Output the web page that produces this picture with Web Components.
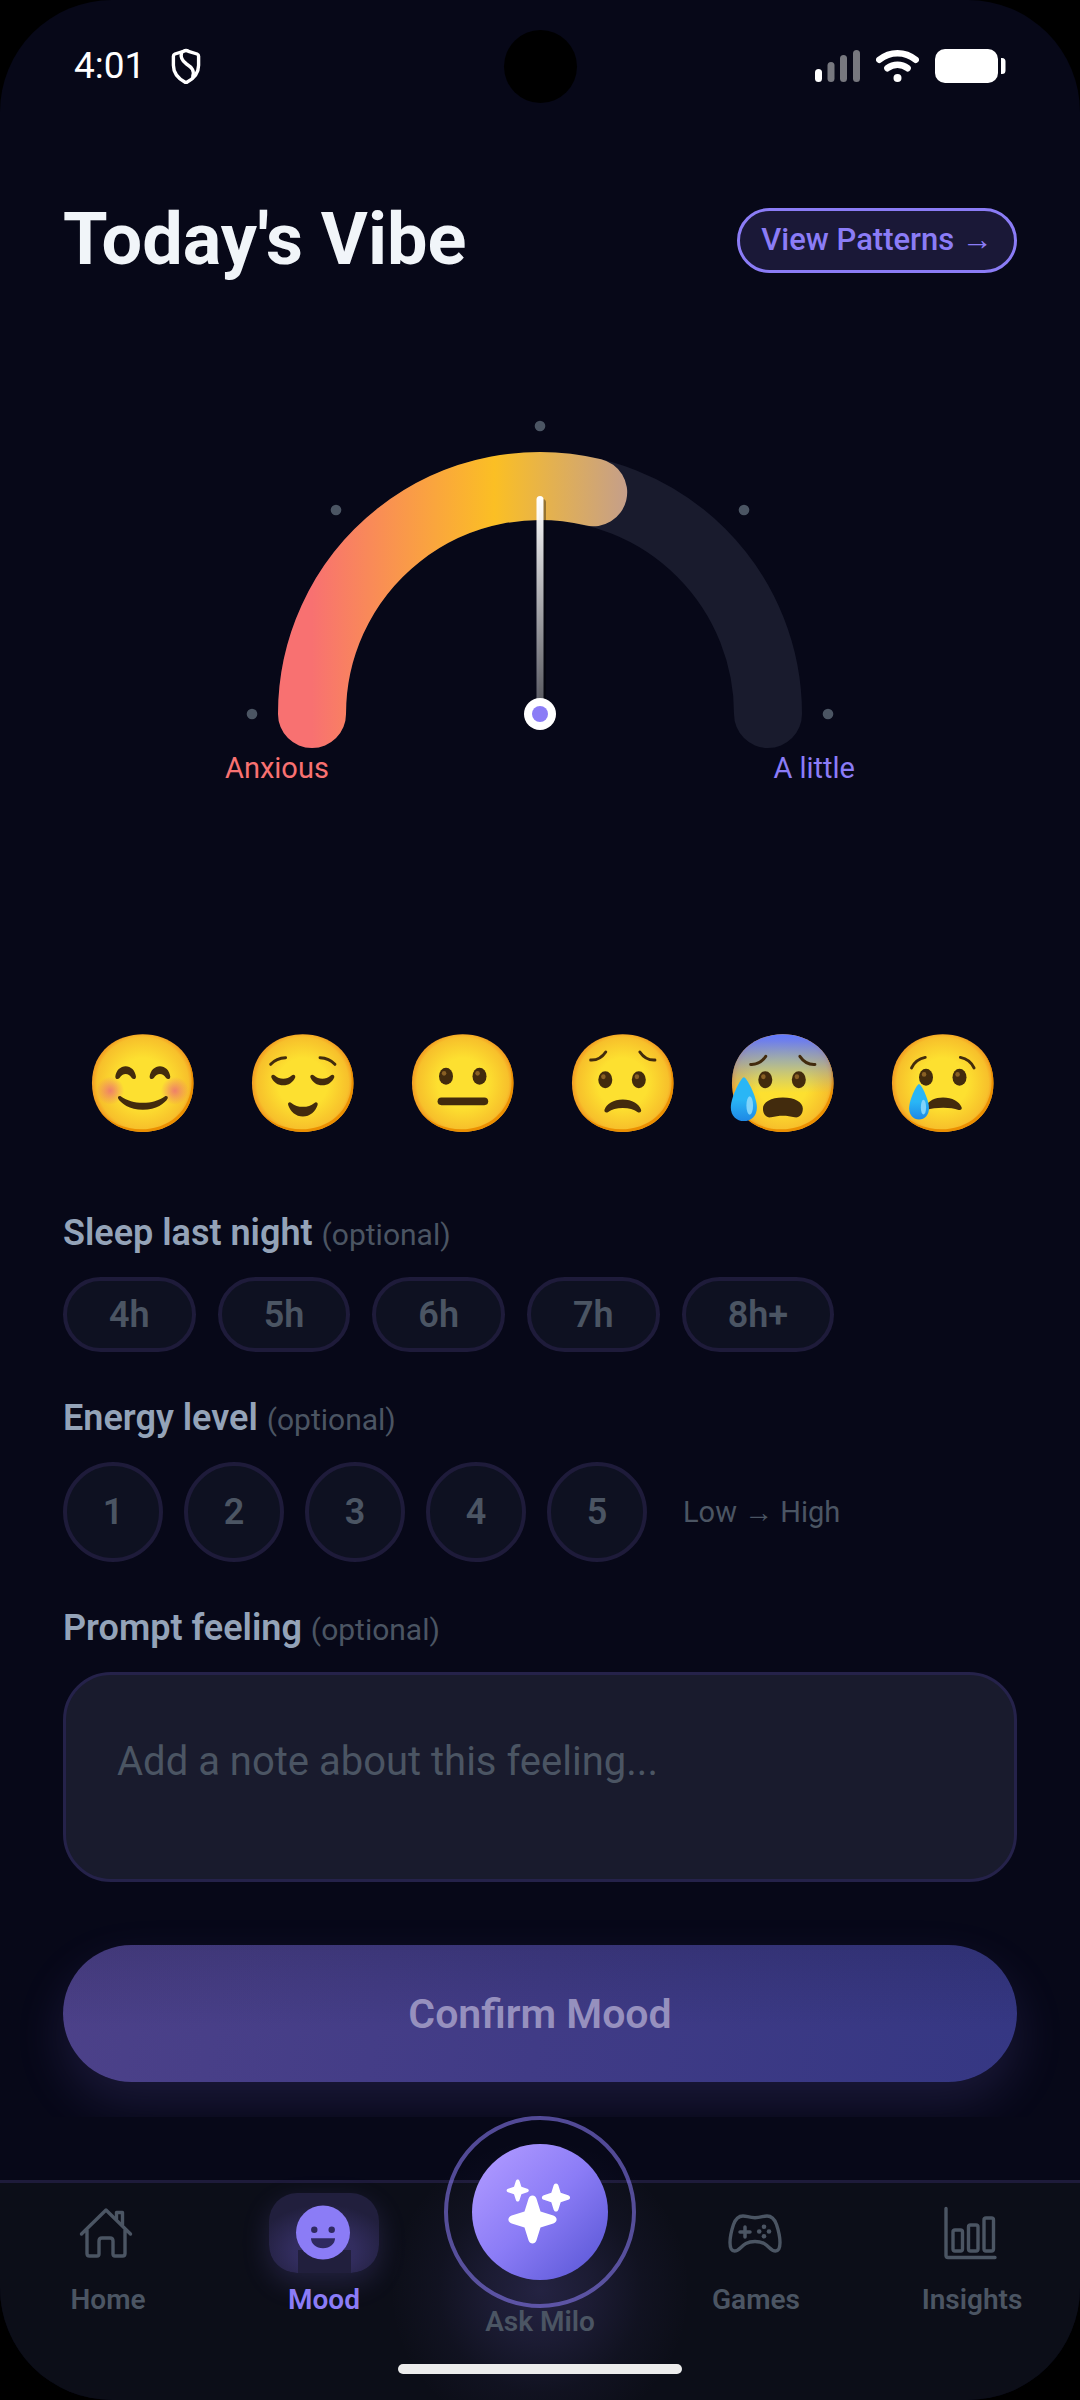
<!DOCTYPE html>
<html lang="en">
<head>
<meta charset="utf-8">
<meta name="viewport" content="width=device-width, initial-scale=1">
<title>Today's Vibe</title>
<style>
  :root {
    --bg: #070818;
    --nav: #0c0e18;
    --card: #191b2d;
    --line: #1e1b3a;
    --accent: #8b7cf6;
    --text: #f1f5f9;
    --label: #94a3b8;
    --muted: #4b5563;
    --gutter: 63px;
  }
  body { margin: 0; background: #000; color: var(--text); font-family: Roboto, "Liberation Sans", sans-serif; }
</style>
</head>
<body>
<vibe-screen>
  <status-bar slot="top" time="4:01"></status-bar>
  <vibe-header heading="Today's Vibe" action="View Patterns →"></vibe-header>
  <mood-gauge low="Anxious" high="A little"></mood-gauge>
  <mood-picker>
    <mood-face mood="happy"></mood-face>
    <mood-face mood="calm"></mood-face>
    <mood-face mood="neutral"></mood-face>
    <mood-face mood="worried"></mood-face>
    <mood-face mood="anxious"></mood-face>
    <mood-face mood="sad"></mood-face>
  </mood-picker>
  <choice-field label="Sleep last night" options="4h,5h,6h,7h,8h+"></choice-field>
  <choice-field label="Energy level" options="1,2,3,4,5" round>Low → High</choice-field>
  <note-field label="Prompt feeling" placeholder="Add a note about this feeling..."></note-field>
  <confirm-button>Confirm Mood</confirm-button>
  <nav-bar slot="bottom">
    <nav-item icon="home">Home</nav-item>
    <nav-item icon="mood" active>Mood</nav-item>
    <ask-item>Ask Milo</ask-item>
    <nav-item icon="games">Games</nav-item>
    <nav-item icon="insights">Insights</nav-item>
  </nav-bar>
</vibe-screen>

<script>
// every element gets the same reset, then its own markup
const RESET = `<style>
  *{box-sizing:border-box}
  button,textarea{font:inherit;color:inherit;margin:0}
  button{cursor:pointer}
  a{color:inherit;text-decoration:none}
  svg{display:block}
</style>`;

class Base extends HTMLElement {
  connectedCallback() {
    if (this.shadowRoot) return;
    this.attachShadow({ mode: 'open' }).innerHTML = RESET + this.render();
  }
  attr(name) { return this.getAttribute(name) || ''; }
}

// "→" sits in its own span so it can be drawn lighter than the words around it
const arrows = s => s.replace('→', '<span class="arrow">→</span>');

customElements.define('vibe-screen', class extends Base {
  render() {
    return `<style>
      :host{display:flex;flex-direction:column;min-height:100vh;background:var(--bg);border-radius:112px;overflow:hidden}
      main{flex:1;display:flex;flex-direction:column;padding:64px var(--gutter) 35px;margin-bottom:63px;overflow:hidden}
    </style>
    <slot name="top"></slot>
    <main><slot></slot></main>
    <slot name="bottom"></slot>`;
  }
});

customElements.define('status-bar', class extends Base {
  render() {
    return `<style>
      :host{display:grid;grid-template-columns:1fr 73px 1fr;align-items:center;height:132px;padding:0 74px;color:#fff;font-size:37px;line-height:44px}
      .left{display:flex;align-items:center;gap:26px}
      .camera{width:73px;height:73px;border-radius:50%;background:#000}
      .right{display:flex;align-items:center;justify-content:flex-end;gap:16px}
    </style>
    <div class="left">
      <time>${this.attr('time')}</time>
      <svg width="30" height="36" viewBox="0 0 30 36" fill="none" stroke="#fff" stroke-width="3.4" stroke-linejoin="round" stroke-linecap="round">
        <path d="M15 2.500q1.200 0 2.500.8l8.600 2.700q1.500.6 1.500 2.200v9c0 7.600-4.800 13.600-12.600 17.600C7.200 30.800 2.400 24.800 2.400 17.200v-9q0-1.600 1.500-2.200l8.600-2.700q1.300-.8 2.500-.8z"/>
        <path d="M10.600 4.500C9 10 11.500 13.200 15.500 16c5.500 3.600 8 6.300 6.300 12.300"/>
      </svg>
    </div>
    <div class="camera"></div>
    <div class="right">
      <svg width="45" height="34" viewBox="0 0 45 34" fill="#77787f">
        <rect x="0" y="20" width="7" height="13" rx="3.500" fill="#fff"/>
        <rect x="12.500" y="13" width="7" height="20" rx="3.500"/>
        <rect x="25" y="6" width="7" height="27" rx="3.500"/>
        <rect x="38" y="1" width="7" height="32" rx="3.500"/>
      </svg>
      <svg width="43" height="34" viewBox="0 0 43 34" fill="none" stroke="#fff" stroke-width="6.500" stroke-linecap="round">
        <path d="M3.300 10.800c10.800-8.800 25.600-8.800 36.400 0M11.400 19.200c6-4.500 14.200-4.500 20.200 0"/>
        <circle cx="21.500" cy="29" r="4" fill="#fff" stroke="none"/>
      </svg>
      <svg width="71" height="34" viewBox="0 0 71 34" fill="#fff">
        <rect width="63" height="34" rx="10"/>
        <path d="M66 9h1a3.500 3.500 0 0 1 3.500 3.500v9A3.500 3.500 0 0 1 67 25h-1z"/>
      </svg>
    </div>`;
  }
});

customElements.define('vibe-header', class extends Base {
  render() {
    return `<style>
      :host{display:flex;align-items:center;justify-content:space-between}
      h1{margin:0;font-size:72px;line-height:88px;font-weight:700}
      button{height:65px;padding:0 21px;border:3px solid var(--accent);border-radius:33px;background:rgba(139,124,246,.14);color:var(--accent);font-size:31px;line-height:36px;font-weight:500}
      .arrow{font-weight:400}
    </style>
    <h1>${this.attr('heading')}</h1>
    <button type="button">${arrows(this.attr('action'))}</button>`;
  }
});

// half dial: the track runs from 9 to 3 o'clock on a 228 radius
customElements.define('mood-gauge', class extends Base {
  render() {
    return `<style>
      :host{display:block;align-self:center;width:630px;max-width:100%;margin-top:136px}
      svg{width:100%}
      div{display:flex;justify-content:space-between;font-size:29px;line-height:34px}
      .low{color:#f87171}
      .high{color:var(--accent)}
    </style>
    <svg viewBox="-315 -294 630 331" fill="none" role="img">
      <defs>
        <linearGradient id="arc" gradientUnits="userSpaceOnUse" x1="-228" y1="0" x2="228" y2="0">
          <stop stop-color="#f87171"/><stop offset=".4" stop-color="#fbbf24"/><stop offset="1" stop-color="#8b7cf6"/>
        </linearGradient>
        <linearGradient id="hand" gradientUnits="userSpaceOnUse" x1="0" y1="-218" x2="0" y2="0">
          <stop stop-color="#fff"/><stop offset="1" stop-color="#fff" stop-opacity=".3"/>
        </linearGradient>
      </defs>
      <g fill="#4b5563">
        <circle cx="-288" cy="0" r="5.300"/><circle cx="-204" cy="-204" r="5.300"/><circle cx="0" cy="-288" r="5.300"/>
        <circle cx="204" cy="-204" r="5.300"/><circle cx="288" cy="0" r="5.300"/>
      </g>
      <g stroke-width="68" stroke-linecap="round">
        <path d="M-228 0A228 228 0 0 1 228 0" stroke="#191b2d"/>
        <path d="M-228 0A228 228 0 0 1 53.200-221.700" stroke="url(#arc)"/>
      </g>
      <rect x="-1" y="-215" width="7" height="212" rx="3.500" fill="#000" fill-opacity=".35"/>
      <rect x="-3.500" y="-218" width="7" height="215" rx="3.500" fill="url(#hand)"/>
      <circle r="16" fill="#fff"/><circle r="8" fill="#8b7cf6"/>
    </svg>
    <div><span class="low">${this.attr('low')}</span><span class="high">${this.attr('high')}</span></div>`;
  }
});

customElements.define('mood-picker', class extends Base {
  render() {
    return `<style>
      :host{display:flex;gap:6px;margin:243px 0 72px}
      ::slotted(*){flex:1}
    </style><slot></slot>`;
  }
});

const MIRROR = 'transform="matrix(-1 0 0 1 127.400 0)"';
const both = (shape) => `${shape}<g ${MIRROR}>${shape}</g>`;
const brow = d => both(`<path d="${d}" fill="none" stroke="#422b0d" stroke-width="3.400" stroke-linecap="round"/>`);
const eyes = (x, y) => [x, x + 38.3].map(cx =>
  `<ellipse cx="${cx}" cy="${y}" rx="8" ry="9.700"/><ellipse cx="${cx - 2.2}" cy="${y - 3.4}" rx="2.600" ry="2.800" fill="#896024"/>`).join('');

const FACES = {
  happy: `<circle cx="26.500" cy="71.700" r="16" fill="url(#blush)"/><circle cx="100.400" cy="71.700" r="16" fill="url(#blush)"/>
    ${both('<path d="M32.300 55.500c.8-7 6-11.800 11.800-11.800s11 4.800 11.800 11.800c.2 3.200-3.200 3.800-4.800 1.600-2-2.600-4.200-4.400-7-4.400s-5 1.800-7 4.400c-1.600 2.200-5 1.600-4.800-1.600z"/>')}
    <path d="M35.400 80.200c-.5-2 1.600-3.200 3.400-2 7 4.800 15.200 7.300 25 7.300s18-2.500 25-7.300c1.800-1.200 3.900 0 3.400 2-2.600 5.500-13.400 13.300-28.400 13.300s-25.800-7.800-28.400-13.300z"/>`,
  calm: `${brow('M27 41.500c4-4.500 10-7.400 17-7.600')}
    ${both('<path d="M27.800 56.500c-.8-2.600 2-4 4-2.200 3 2.400 6 3.700 9.600 3.700s6.600-1.300 9.600-3.700c2-1.800 4.800-.4 4 2.200-2.400 5.500-7.400 9-13.600 9s-11.200-3.500-13.600-9z"/>')}
    <path d="M47 88c-.8-2.400 1.600-4 3.600-2.400 3.800 3 8 4.500 13.200 4.500s9.400-1.500 13.200-4.500c2-1.600 4.400 0 3.600 2.400-2.200 7.400-8.800 13.200-16.800 13.200s-14.600-5.800-16.800-13.200z"/>`,
  neutral: `${eyes(44.5, 55.2)}<rect x="34.900" y="79.400" width="57.800" height="8.800" rx="4.400"/>`,
  worried: `${brow('M27 36.600c7 .4 13-3 17.200-9.200')}${eyes(43.7, 59.1)}
    <path d="M42.800 93.500c2-6.600 10.400-11.800 20.900-11.800s18.900 5.200 20.900 11.800c.8 2.600-2 4-4.200 2.400-4-3-9.600-4.600-16.700-4.600s-12.700 1.600-16.700 4.600c-2.200 1.600-5 .2-4.200-2.400z"/>`,
  anxious: `<path d="M63.600 7C35.700 7 5.600 24.500 5.600 62.900c0 4 .3 7.700 1 11.100h114c.7-3.500 1-7.200 1-11.100 0-16.900-6.100-31.300-17.600-41.500C93.400 12.100 79.100 7 63.600 7z" fill="url(#chill)"/>
    ${brow('M27 41.600c7 .4 13-3 17.200-9.200')}${eyes(43.7, 59.1)}
    <path d="M41 92c0-7 9-12.600 22.800-12.600s22.800 5.600 22.800 12.600-4.400 11-9.400 10c-4.400-1.200-8.600-1.800-13.400-1.800s-9 .6-13.400 1.800c-5 1-9.400-3-9.400-10z"/>
    <path d="M19.200 56.400c3 0 14.900 22 14.900 34.600 0 9-6.600 15.400-14.900 15.400S4.300 100 4.300 91c0-12.600 11.900-34.600 14.900-34.600z" fill="url(#drop)"/>
    <ellipse cx="25.900" cy="88.500" rx="3.800" ry="10.500" fill="#81d4fa"/>`,
  sad: `${brow('M28 45.600c3-6.400 8.600-10.600 15.600-12')}${eyes(44.5, 56.4)}
    <path d="M44 90c3-7 11-10.600 20-10.600 10.500 0 18.600 4.600 21.200 11.200.8 2.400-1.200 3.800-3.400 3-5-1.800-10-2.600-17.600-2.600-8 0-13 .8-20.200 2.600z"/>
    <path d="M36.500 64c2.400 0 11.400 17.400 11.400 28 0 7.400-5 12.600-11.400 12.600S25.200 99.400 25.200 92c0-10.600 9-28 11.300-28z" fill="url(#drop)"/>
    <ellipse cx="41.600" cy="90.500" rx="3" ry="8.400" fill="#81d4fa"/>`
};

customElements.define('mood-face', class extends Base {
  render() {
    const mood = this.attr('mood');
    return `<style>
      :host{display:block}
      button{display:flex;justify-content:center;width:100%;padding:0;border:0;background:none}
    </style>
    <button type="button" aria-label="${mood}">
      <svg width="112" height="112" viewBox="-3.500 0 128 128" fill="#422b0d">
        <defs>
          <radialGradient id="skin" gradientUnits="userSpaceOnUse" cx="63.600" cy="62.900" r="57">
            <stop offset=".5" stop-color="#fde030"/><stop offset=".92" stop-color="#f7c02b"/><stop offset="1" stop-color="#f4a223"/>
          </radialGradient>
          <radialGradient id="blush"><stop stop-color="#ed7770" stop-opacity=".9"/><stop offset="1" stop-color="#ed7770" stop-opacity="0"/></radialGradient>
          <linearGradient id="chill" x1="0" y1="0" x2="0" y2="1">
            <stop stop-color="#6179ff"/><stop offset=".12" stop-color="#6179ff" stop-opacity=".9"/><stop offset=".5" stop-color="#6b94ee" stop-opacity=".55"/><stop offset="1" stop-color="#7fb0d8" stop-opacity="0"/>
          </linearGradient>
          <linearGradient id="drop" x1="0" y1="0" x2="0" y2="1"><stop offset=".5" stop-color="#29b6f6"/><stop offset="1" stop-color="#1e88e5"/></linearGradient>
        </defs>
        <path d="M63.600 118.800c-27.900 0-58-17.500-58-55.900S35.700 7 63.600 7c15.500 0 29.800 5.100 40.400 14.400 11.500 10.200 17.600 24.600 17.600 41.500s-6.100 31.200-17.600 41.400c-10.600 9.300-25 14.500-40.400 14.500z" fill="url(#skin)"/>
        <path d="M111.490 29.670c5.330 8.600 8.110 18.840 8.110 30.230 0 16.900-6.100 31.200-17.600 41.400-10.600 9.300-25 14.500-40.400 14.500-18.060 0-37-7.350-48.180-22.940 10.760 17.660 31 25.940 50.180 25.940 15.400 0 29.800-5.200 40.400-14.500 11.500-10.200 17.600-24.500 17.600-41.400 0-12.740-3.470-24.060-10.110-33.230z" fill="#eb8f00"/>
        ${FACES[mood]}
      </svg>
    </button>`;
  }
});

const LABEL = `
  .label{display:block;margin-bottom:23px;font-size:36px;line-height:42px;font-weight:600;color:var(--label)}
  small{font-size:30px;line-height:30px;font-weight:400;color:var(--muted)}`;

customElements.define('choice-field', class extends Base {
  render() {
    return `<style>${LABEL}
      :host{display:block;margin-bottom:45px}
      .row{display:flex;flex-wrap:wrap;align-items:center;gap:22px}
      button{height:75px;padding:0 42px;border:4px solid var(--line);border-radius:38px;background:#0e1121;color:var(--muted);font-size:36px;line-height:42px;font-weight:600}
      :host([round]) .row{gap:21px}
      :host([round]) button{width:100px;height:100px;padding:0;border-radius:50%}
      .hint{margin-left:15px;font-size:29px;line-height:34px;color:var(--muted)}
      :host(:not([round])) .hint{display:none}
    </style>
    <span class="label" id="label">${this.attr('label')} <small>(optional)</small></span>
    <div class="row" role="group" aria-labelledby="label">
      ${this.attr('options').split(',').map(o => `<button type="button">${o}</button>`).join('')}
      <span class="hint"><slot></slot></span>
    </div>`;
  }
});

customElements.define('note-field', class extends Base {
  render() {
    return `<style>${LABEL}
      :host{display:block;margin-bottom:63px}
      textarea{display:block;width:100%;height:210px;padding:63px 51px;border:3px solid #25224a;border-radius:48px;background:var(--card);color:var(--text);font-size:40px;line-height:48px;resize:none;outline:0;overflow:hidden}
      textarea::placeholder{color:var(--muted);opacity:1}
    </style>
    <label class="label" for="note">${this.attr('label')} <small>(optional)</small></label>
    <textarea id="note" placeholder="${this.attr('placeholder')}"></textarea>`;
  }
});

customElements.define('confirm-button', class extends Base {
  render() {
    return `<style>
      :host{display:block}
      button{display:block;width:100%;height:137px;border:0;border-radius:69px;
        background:linear-gradient(rgba(7,8,24,.14),rgba(7,8,24,0) 60%),linear-gradient(100deg,#4c4189,#403b86 50%,#353783);
        box-shadow:0 22px 50px rgba(139,124,246,.15);color:#9690be;font-size:41px;line-height:48px;font-weight:600}
    </style>
    <button type="button"><slot></slot></button>`;
  }
});

customElements.define('nav-bar', class extends Base {
  render() {
    return `<style>
      :host{display:block;background:var(--nav);border-top:3px solid var(--line);padding:10px 0 26px}
      nav{display:grid;grid-template-columns:repeat(5,1fr);align-items:start}
      .handle{position:relative;width:284px;height:10px;margin:26px auto 0;border-radius:5px;background:#ececec}
    </style>
    <nav><slot></slot></nav>
    <div class="handle"></div>`;
  }
});

const NAV_LABEL = 'font-size:28px;line-height:32px;font-weight:600;';

const ICONS = {
  home: `<path d="M28.500 41 53 17l24.500 24M34 37v23.500q0 2.500 2.500 2.500H44q2 0 2-2V48q0-3 3-3h8q3 0 3 3v13q0 2 2 2h7.500q2.500 0 2.500-2.500V37"/><path d="M63.500 26v-6.500h6V32"/>`,
  games: `<path d="M43 23.500c4 0 6 1.700 12 1.700s8-1.700 12-1.700c5 0 7.500 3 9.500 8.500 2 6 3.500 13 3.500 18 0 5-1.500 8.500-4.500 8.500-7 0-6.500-9.500-20.500-9.500S41.500 58.500 34.500 58.500c-3 0-4.500-3.500-4.500-8.500 0-5 1.500-12 3.500-18 2-5.500 4.500-8.500 9.500-8.500z" transform="translate(-1 -.5)"/>
    <path d="M44 34v10M39 39h10" stroke-width="3.500"/>
    <g fill="currentColor" stroke="none"><circle cx="63" cy="33.700" r="2.300"/><circle cx="63" cy="43.300" r="2.300"/><circle cx="58.200" cy="38.500" r="2.300"/><circle cx="68" cy="38.500" r="2.300"/></g>`,
  insights: `<path d="M29 15.500v47q0 2 2 2h47"/><rect x="36" y="37" width="9.500" height="21" rx="2"/><rect x="51.500" y="32" width="9.500" height="26" rx="2"/><rect x="67" y="25" width="9.500" height="33" rx="2"/>`,
  mood: `<circle cx="54" cy="39.500" r="27" fill="currentColor" stroke="none"/>
    <g fill="#2f2960" stroke="none"><circle cx="45.300" cy="36.700" r="3.200"/><circle cx="62.700" cy="36.700" r="3.200"/><path d="M42 45.300h24c0 5.500-5 10-12 10s-12-4.500-12-10z"/></g>`
};

customElements.define('nav-item', class extends Base {
  render() {
    return `<style>
      :host{display:block;color:var(--muted)}
      :host([active]){color:var(--accent)}
      a{display:flex;flex-direction:column;align-items:center;gap:11px;${NAV_LABEL}}
      .icon{width:110px;height:80px;border-radius:28px}
      :host([active]) .icon{
        background:linear-gradient(#211f3d,#211f3d) 50% 100%/53px 23px no-repeat,radial-gradient(ellipse 68px 46px at 50% 72%,#37316a,#322d5e 45%,#211f3d);
        box-shadow:0 10px 28px rgba(139,124,246,.18)}
      span{position:relative}
    </style>
    <a href="#">
      <svg class="icon" viewBox="0 0 110 80" fill="none" stroke="currentColor" stroke-width="3.400" stroke-linecap="round" stroke-linejoin="round">${ICONS[this.attr('icon')]}</svg>
      <span><slot></slot></span>
    </a>`;
  }
});

// four-point star with soft tips, centred on 0,0 with a reach of 12
const STAR = 'M0-12c1.100 0 1.700.7 2 1.600L4-4l6.400 2c2.200.8 2.200 3.200 0 4L4 4l-2 6.400c-.8 2.200-3.200 2.200-4 0L-4 4l-6.400-2c-2.200-.8-2.200-3.200 0-4L-4-4l2-6.400c.3-.9.900-1.600 2-1.600z';

customElements.define('ask-item', class extends Base {
  render() {
    return `<style>
      :host{display:block;position:relative;color:var(--muted)}
      .glow{position:absolute;left:50%;top:-53px;width:300px;height:300px;margin-left:-150px;pointer-events:none;
        background:radial-gradient(circle closest-side,rgba(139,124,246,.19),rgba(139,124,246,.12) 35%,rgba(139,124,246,.04) 68%,transparent)}
      a{position:relative;display:flex;flex-direction:column;align-items:center;margin-top:-77px;${NAV_LABEL}}
      .ring{display:grid;place-items:center;width:192px;height:192px;margin-bottom:-2px;border:4px solid rgba(139,124,246,.57);border-radius:50%}
      .disc{width:136px;height:136px;border-radius:50%;background:linear-gradient(135deg,#ab96ff 12%,#8b7cf6 50%,#625ddb 88%)}
    </style>
    <div class="glow"></div>
    <a href="#">
      <span class="ring"><svg class="disc" viewBox="0 0 136 136" fill="#fff">
        <path d="${STAR}" transform="translate(60.500 75.500) scale(2)"/>
        <path d="${STAR}" transform="translate(45.700 46.500) scale(.92)"/>
        <path d="${STAR}" transform="translate(84 53.500) scale(1.170)"/>
      </svg></span>
      <span><slot></slot></span>
    </a>`;
  }
});
</script>
</body>
</html>
